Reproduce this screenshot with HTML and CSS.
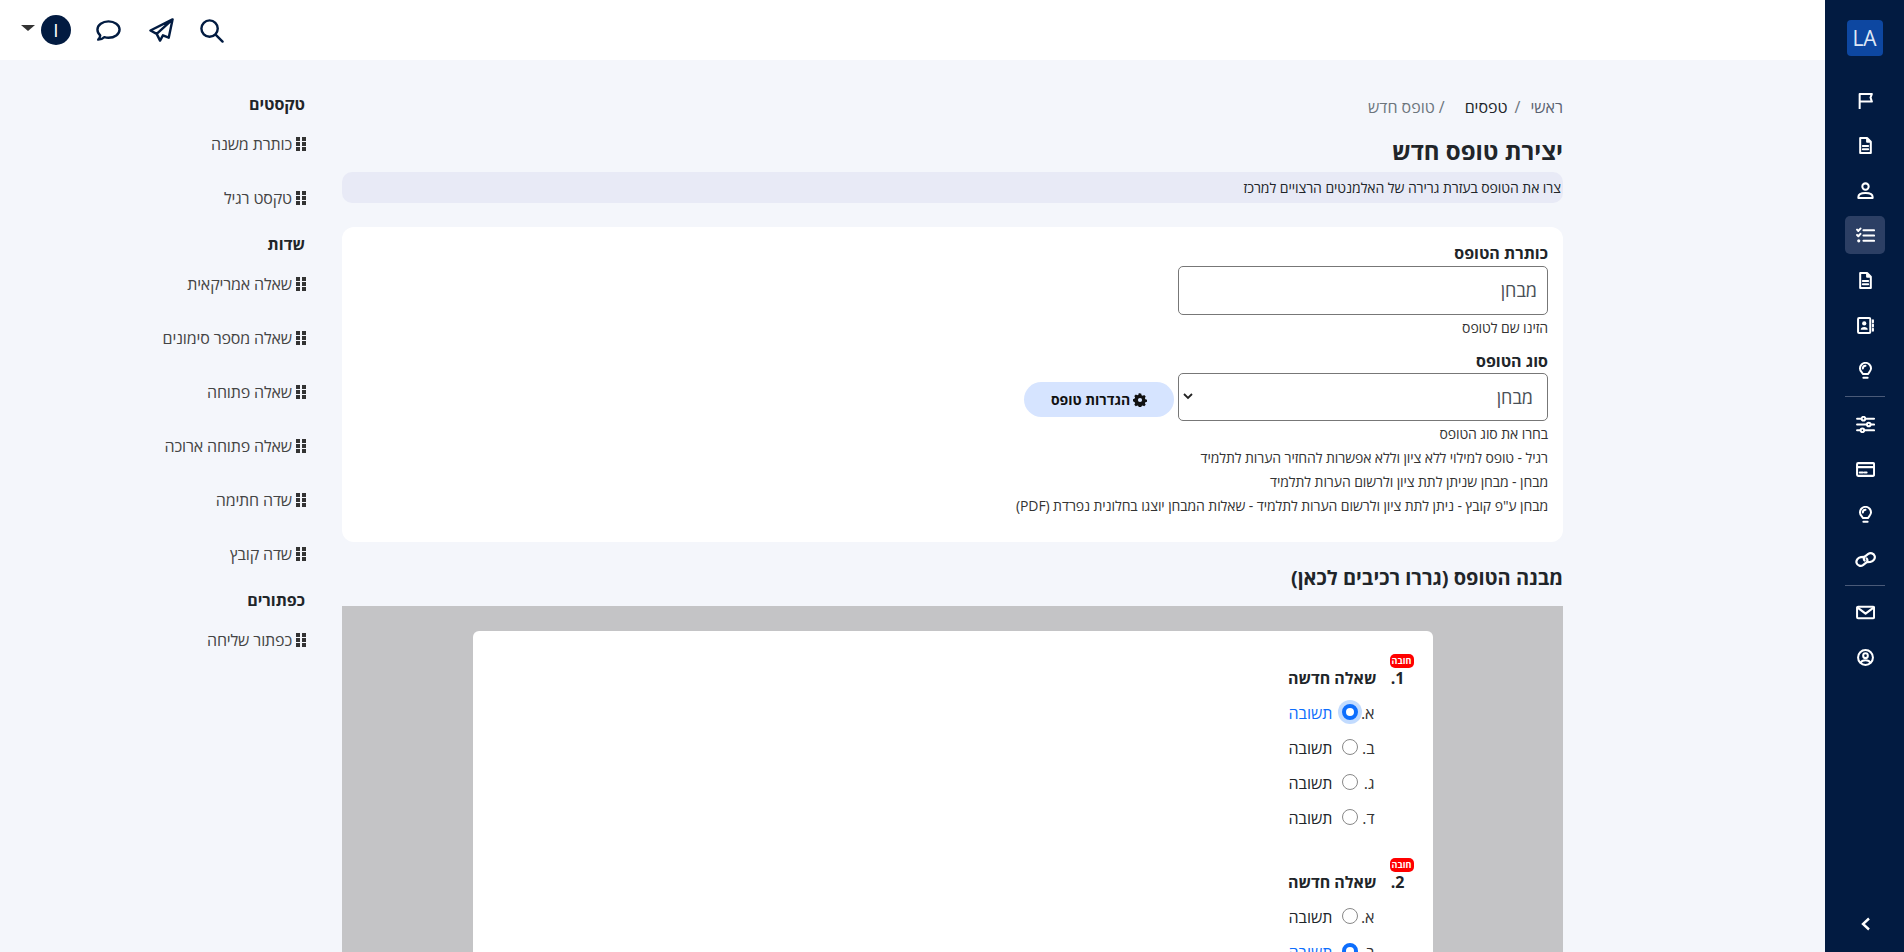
FILE: index.html
```html
<!DOCTYPE html>
<html lang="he" dir="rtl">
<head>
<meta charset="utf-8">
<title>יצירת טופס חדש</title>
<link rel="stylesheet" href="styles.css">
</head>
<body>
<div class="app">
  <aside class="sidebar">
    <div class="logo">LA</div>
    <nav class="nav">
      <a class="nav-item"><svg viewBox="0 0 16 16"><path d="M2.500 15.500V1.800h11.500l-1.300 3.400 1.300 3.800H2.500"/></svg></a>
      <a class="nav-item"><svg viewBox="0 0 16 16"><path d="M3 1h6.500L13 4.500V15H3zM9.500 1v3.500H13M5.500 8.500h5M5.500 11.500h5"/></svg></a>
      <a class="nav-item"><svg viewBox="0 0 16 16"><circle cx="8" cy="4.300" r="3"/><path d="M1.300 15v-1c0-2.400 2.200-3.700 6.700-3.700s6.700 1.300 6.700 3.700v1z"/></svg></a>
      <a class="nav-item active"><svg viewBox="0 0 18 16"><path d="M1 2.500l1.200 1.200L4.200 1.500M1 7.500l1.200 1.200 2-2.200M7 3h10M7 8h10M7 13h10"/><circle class="fill" cx="2.600" cy="13" r="1.500"/></svg></a>
      <a class="nav-item"><svg viewBox="0 0 16 16"><path d="M3 1h6.500L13 4.500V15H3zM9.500 1v3.500H13M5.500 8.500h5M5.500 11.500h5"/></svg></a>
      <a class="nav-item"><svg viewBox="0 0 16 16"><rect x="1" y="1" width="11.500" height="14" rx="1"/><circle class="fill" cx="6.800" cy="6" r="2"/><path class="fill" d="M3.500 12c0-1.700 1.300-2.600 3.300-2.600s3.300.9 3.300 2.600z"/><path d="M15 3v2M15 7v2M15 11v2"/></svg></a>
      <a class="nav-item"><svg viewBox="0 0 16 16"><path d="M5.500 11.200C4.800 9.500 2.800 8.500 2.800 6a5.200 5.200 0 0 1 10.400 0c0 2.500-2 3.500-2.700 5.200zM6 14.800h4M8 3.500C6.700 3.600 5.500 4.700 5.500 6"/></svg></a>
      <div class="nav-sep"></div>
      <a class="nav-item"><svg viewBox="0 0 18 16"><path d="M1 2.500h16M1 8h16M1 13.500h16"/><circle class="bgfill" cx="7" cy="2.500" r="1.700"/><circle class="bgfill" cx="12" cy="8" r="1.700"/><circle class="bgfill" cx="6" cy="13.500" r="1.700"/></svg></a>
      <a class="nav-item"><svg viewBox="0 0 18 16"><rect x="1" y="2" width="16" height="12" rx="1"/><path class="thick" d="M1 5.800h16"/><path d="M3.500 10.800h3M8 10.800h2"/></svg></a>
      <a class="nav-item"><svg viewBox="0 0 16 16"><path d="M5.500 11.200C4.800 9.500 2.800 8.500 2.800 6a5.200 5.200 0 0 1 10.400 0c0 2.500-2 3.500-2.700 5.200zM6 14.800h4M8 3.500C6.700 3.600 5.500 4.700 5.500 6"/></svg></a>
      <a class="nav-item"><svg class="link" viewBox="0 0 20 16"><path class="thick" d="M8.500 5.500l-3 .3C2.500 6.300.8 9 1.500 11.300c.8 2.700 4 3.300 6 2l3-2.300c1.500-1.200 1.500-3 .5-4M11.500 10.500l3-.3c3-.5 4.700-3.200 4-5.500-.8-2.700-4-3.300-6-2l-3 2.300C8 6.200 8 8 9 9"/></svg></a>
      <div class="nav-sep tight"></div>
      <a class="nav-item"><svg viewBox="0 0 18 16"><rect x="1" y="2.500" width="16" height="11" rx="1"/><path class="thick" d="M1.500 3.500L9 9l7.500-5.500"/></svg></a>
      <a class="nav-item"><svg viewBox="0 0 16 16"><circle cx="8" cy="8" r="7"/><circle cx="8" cy="6.300" r="2.200"/><path d="M3.500 12.800c.6-1.500 2-2.300 4.500-2.300s3.900.8 4.500 2.300"/></svg></a>
    </nav>
    <div class="collapse"><svg viewBox="0 0 12 14"><path d="M9 1.500L3 7l6 5.500"/></svg></div>
  </aside>

  <div class="page">
    <header class="topbar">
      <svg class="top-icon" viewBox="0 0 26 26"><circle cx="11" cy="11" r="8.500"/><path d="M17.500 17.500L24.500 24.500"/></svg>
      <svg class="top-icon plane" viewBox="0 0 26 26"><path d="M24.500 1.500L1.500 13l6.500 3.500zM24.500 1.500L8 16.500l3.500 7 3-5.500 6 2.500z"/></svg>
      <svg class="top-icon chat" viewBox="0 0 26 26"><path d="M13 3.500c6.200 0 11.500 3.500 11.500 8.500s-5.300 8.500-11.500 8.500c-1.600 0-3-.2-4.300-.6C7 21.500 5 22.500 2.300 22.500c1.300-1.300 2-2.800 2.100-4.300C2.600 16.600 1.500 14.500 1.500 12 1.500 7 6.800 3.500 13 3.500z"/></svg>
      <div class="user">
        <span class="avatar">I</span>
        <span class="caret"></span>
      </div>
    </header>

    <div class="content">
      <main class="main">
        <nav class="crumbs">
          <span class="crumb">ראשי</span><span class="crumb-sep">/</span>
          <span class="crumb strong">טפסים</span><span class="crumb-sep near">/</span>
          <span class="crumb muted">טופס חדש</span>
        </nav>
        <h1 class="title">יצירת טופס חדש</h1>
        <div class="lead">צרו את הטופס בעזרת גרירה של האלמנטים הרצויים למרכז</div>

        <section class="card">
          <div class="label">כותרת הטופס</div>
          <div class="field-box input-box">מבחן</div>
          <div class="help first">הזינו שם לטופס</div>
          <div class="label second">סוג הטופס</div>
          <div class="select-row">
            <div class="field-box select-box">
              <span>מבחן</span>
              <svg class="chev" viewBox="0 0 10 8"><path d="M1 2l4 4 4-4"/></svg>
            </div>
            <button class="settings">
              <svg class="gear" viewBox="0 0 16 16"><path d="M8 .5l1.300.2.500 1.900 1.300.6 1.700-.9 1.700 1.800-.9 1.600.5 1.300 1.900.6v2.300l-1.900.6-.5 1.300.9 1.600-1.700 1.800-1.700-.9-1.300.6-.5 1.900H6.700l-.5-1.900-1.300-.6-1.700.9-1.700-1.800.9-1.600-.5-1.300L0 9.300V7l1.900-.6.500-1.300-.9-1.600 1.700-1.800 1.700.9 1.300-.6.500-1.900z"/><circle class="hole" cx="8" cy="8" r="2.400"/></svg>
              הגדרות טופס
            </button>
          </div>
          <div class="help">בחרו את סוג הטופס</div>
          <div class="help">רגיל - טופס למילוי ללא ציון וללא אפשרות להחזיר הערות לתלמיד</div>
          <div class="help">מבחן - מבחן שניתן לתת ציון ולרשום הערות לתלמיד</div>
          <div class="help">מבחן ע"פ קובץ - ניתן לתת ציון ולרשום הערות לתלמיד - שאלות המבחן יוצגו בחלונית נפרדת (PDF)</div>
        </section>

        <h2 class="subtitle">מבנה הטופס (גררו רכיבים לכאן)</h2>

        <section class="canvas">
          <div class="paper">
            <div class="question">
              <span class="badge">חובה</span>
              <div class="q-title"><span class="q-num">1.</span><span>שאלה חדשה</span></div>
              <label class="option selected"><span class="letter">א.</span><input class="radio focused" type="radio" name="q1" checked><span>תשובה</span></label>
              <label class="option"><span class="letter">ב.</span><input class="radio" type="radio" name="q1"><span>תשובה</span></label>
              <label class="option"><span class="letter">ג.</span><input class="radio" type="radio" name="q1"><span>תשובה</span></label>
              <label class="option"><span class="letter">ד.</span><input class="radio" type="radio" name="q1"><span>תשובה</span></label>
            </div>
            <div class="question">
              <span class="badge">חובה</span>
              <div class="q-title"><span class="q-num">2.</span><span>שאלה חדשה</span></div>
              <label class="option"><span class="letter">א.</span><input class="radio" type="radio" name="q2"><span>תשובה</span></label>
              <label class="option selected"><span class="letter">ב.</span><input class="radio" type="radio" name="q2" checked><span>תשובה</span></label>
            </div>
          </div>
        </section>
      </main>

      <aside class="palette">
        <div class="p-head">טקסטים</div>
        <div class="p-item"><svg class="grip" viewBox="0 0 10 14"><path d="M0 0h4v4H0zM6 0h4v4H6zM0 5h4v4H0zM6 5h4v4H6zM0 10h4v4H0zM6 10h4v4H6z"/></svg>כותרת משנה</div>
        <div class="p-item"><svg class="grip" viewBox="0 0 10 14"><path d="M0 0h4v4H0zM6 0h4v4H6zM0 5h4v4H0zM6 5h4v4H6zM0 10h4v4H0zM6 10h4v4H6z"/></svg>טקסט רגיל</div>
        <div class="p-head">שדות</div>
        <div class="p-item"><svg class="grip" viewBox="0 0 10 14"><path d="M0 0h4v4H0zM6 0h4v4H6zM0 5h4v4H0zM6 5h4v4H6zM0 10h4v4H0zM6 10h4v4H6z"/></svg>שאלה אמריקאית</div>
        <div class="p-item"><svg class="grip" viewBox="0 0 10 14"><path d="M0 0h4v4H0zM6 0h4v4H6zM0 5h4v4H0zM6 5h4v4H6zM0 10h4v4H0zM6 10h4v4H6z"/></svg>שאלה מספר סימונים</div>
        <div class="p-item"><svg class="grip" viewBox="0 0 10 14"><path d="M0 0h4v4H0zM6 0h4v4H6zM0 5h4v4H0zM6 5h4v4H6zM0 10h4v4H0zM6 10h4v4H6z"/></svg>שאלה פתוחה</div>
        <div class="p-item"><svg class="grip" viewBox="0 0 10 14"><path d="M0 0h4v4H0zM6 0h4v4H6zM0 5h4v4H0zM6 5h4v4H6zM0 10h4v4H0zM6 10h4v4H6z"/></svg>שאלה פתוחה ארוכה</div>
        <div class="p-item"><svg class="grip" viewBox="0 0 10 14"><path d="M0 0h4v4H0zM6 0h4v4H6zM0 5h4v4H0zM6 5h4v4H6zM0 10h4v4H0zM6 10h4v4H6z"/></svg>שדה חתימה</div>
        <div class="p-item"><svg class="grip" viewBox="0 0 10 14"><path d="M0 0h4v4H0zM6 0h4v4H6zM0 5h4v4H0zM6 5h4v4H6zM0 10h4v4H0zM6 10h4v4H6z"/></svg>שדה קובץ</div>
        <div class="p-head">כפתורים</div>
        <div class="p-item"><svg class="grip" viewBox="0 0 10 14"><path d="M0 0h4v4H0zM6 0h4v4H6zM0 5h4v4H0zM6 5h4v4H6zM0 10h4v4H0zM6 10h4v4H6z"/></svg>כפתור שליחה</div>
      </aside>
    </div>
  </div>
</div>
</body>
</html>
```

FILE: styles.css
```css
* { box-sizing: border-box; }
html, body { margin: 0; height: 100%; overflow: hidden; }
body {
  font-family: "Open Sans", "Noto Sans", "Liberation Sans", sans-serif;
  font-size: 16px;
  color: #212529;
  background: #f4f6fb;
}
.app { display: flex; height: 952px; overflow: hidden; }

/* sidebar */
.sidebar {
  width: 79px;
  flex: none;
  background: #021b41;
  display: flex;
  flex-direction: column;
  align-items: center;
  padding-top: 20px;
  position: relative;
}
.logo {
  width: 36px;
  height: 36px;
  background: #0d47a1;
  border-radius: 4px;
  color: #dfe8f6;
  font-size: 21px;
  line-height: 36px;
  text-align: center;
}
.nav { display: flex; flex-direction: column; align-items: center; margin-top: 25px; width: 40px; }
.nav-item {
  width: 40px;
  height: 38px;
  margin-bottom: 7px;
  border-radius: 5px;
  display: flex;
  align-items: center;
  justify-content: center;
  padding-left: 2px;
  flex: none;
}
.nav-item.active { background: #2c3f64; }
.nav-item svg { height: 17px; width: auto; fill: none; stroke: #fff; stroke-width: 1.9; stroke-linejoin: round; stroke-linecap: round; }
.nav-item svg .fill { fill: #fff; stroke: none; }
.nav-item svg .bgfill { fill: #021b41; }
.nav-item svg .thick { stroke-width: 2.100; }
.nav-sep { width: 40px; height: 1px; background: #4a5a78; margin: 0 0 8px; flex: none; }
.nav-sep.tight { margin-bottom: 7px; }
.collapse { position: absolute; bottom: 21px; left: 0; right: 0; display: flex; justify-content: center; padding-left: 2px; }
.collapse svg { width: 12px; height: 14px; fill: none; stroke: #fff; stroke-width: 2.400; }

/* page */
.page { flex: 1; min-width: 0; display: flex; flex-direction: column; }
.topbar {
  height: 60px;
  flex: none;
  background: #fff;
  display: flex;
  align-items: center;
  justify-content: flex-end;
  padding-left: 21px;
}
.top-icon { width: 25px; height: 25px; fill: none; stroke: #021b41; stroke-width: 2.500; stroke-linejoin: round; stroke-linecap: round; margin-left: 25px; flex: none; }
.top-icon.plane { margin-left: 28px; }
.top-icon.chat { margin-left: 25px; }
.user { display: flex; align-items: center; gap: 6px; }
.avatar {
  width: 30px;
  height: 30px;
  border-radius: 50%;
  background: #021b41;
  color: #fff;
  font-size: 19px;
  line-height: 30px;
  text-align: center;
}
.caret { width: 0; height: 0; border-left: 7px solid transparent; border-right: 7px solid transparent; border-top: 6px solid #333; margin-top: -4px; }

.content { display: flex; flex: 1; min-height: 0; }
.main { width: 1221px; margin-right: 262px; flex: none; padding-top: 35px; }

.crumbs { display: flex; align-items: center; font-size: 16px; line-height: 24px; height: 24px; color: #555; }
.crumb { color: #5a6270; }
.crumb.strong { color: #212529; margin-left: 10px; }
.crumb.muted { color: #6c757d; }
.crumb-sep { margin: 0 10px 0 7px; color: #6c757d; }
.crumb-sep.near { margin-left: 4px; }
.title { margin: 14px 0 0; font-size: 24px; font-weight: 700; line-height: 36px; height: 36px; color: #212529; }
.lead {
  margin-top: 3px;
  height: 31px;
  background: #e8eaf6;
  border-radius: 10px;
  font-size: 14px;
  letter-spacing: -0.07px;
  line-height: 31px;
  padding: 0 2px;
  color: #212529;
}
.card {
  background: #fff;
  border-radius: 12px;
  margin-top: 24px;
  height: 315px;
  padding: 14px 15px 0;
}
.label { font-size: 16px; font-weight: 700; line-height: 24px; height: 24px; color: #212529; }
.label.second { margin-top: 9px; }
.field-box {
  width: 370px;
  border: 1px solid #777;
  border-radius: 5px;
  background: #fff;
  font-size: 18px;
  color: #495057;
}
.input-box { height: 49px; line-height: 47px; padding: 0 10px; margin-top: 1px; }
.select-row { display: flex; align-items: center; gap: 4px; margin-bottom: 1px; }
.select-box { height: 48px; line-height: 46px; padding: 0 14px 0 4px; display: flex; justify-content: space-between; align-items: center; flex: none; }
.chev { width: 10px; height: 8px; fill: none; stroke: #222; stroke-width: 1.800; margin-top: -2px; }
.settings {
  width: 150px;
  height: 35px;
  margin-top: 5px;
  border: 0;
  border-radius: 18px;
  background: #d6e4ff;
  font-family: inherit;
  font-size: 14px;
  font-weight: 700;
  color: #111;
  display: flex;
  align-items: center;
  justify-content: center;
  gap: 3px;
  padding: 0;
}
.gear { width: 14px; height: 14px; fill: #111; }
.gear .hole { fill: #d6e4ff; }
.help { font-size: 14px; letter-spacing: -0.09px; line-height: 24px; height: 24px; color: #333; }
.help.first { margin-top: 1px; }

.subtitle { margin: 21px 0 0; font-size: 20px; font-weight: 700; line-height: 30px; height: 30px; color: #212529; }
.canvas { margin-top: 13px; background: #c4c4c6; height: 700px; padding-top: 25px; }
.paper { width: 960px; margin: 0 auto; background: #fff; border-radius: 6px; height: 660px; }
.question { position: relative; padding: 24px 28px 0 0; height: 204px; }
.badge {
  position: absolute;
  top: 23px;
  right: 19px;
  width: 24px;
  height: 14px;
  background: #f00;
  color: #fff;
  border-radius: 5px;
  font-size: 9px;
  font-weight: 700;
  line-height: 14px;
  text-align: center;
}
.q-title { display: flex; font-weight: 700; font-size: 16px; line-height: 24px; height: 24px; margin: 11px 0 5px; }
.q-num { width: 28px; flex: none; }
.option { display: flex; align-items: center; height: 35px; font-size: 16px; color: #212529; margin-right: 30px; }
.option.selected { color: #0d6efd; }
.option .letter { color: #333; width: 17px; flex: none; }
.radio {
  appearance: none;
  width: 16px;
  height: 16px;
  border: 1px solid #888;
  border-radius: 50%;
  background: #fff;
  margin: 0 0 2px 9px;
  flex: none;
}
.radio:checked { border: 4px solid #0d6efd; }
.radio.focused { box-shadow: 0 0 0 4px rgba(13, 110, 253, .25); }

/* palette */
.palette { width: 290px; margin-right: 36px; padding-top: 32px; flex: none; color: #444; }
.p-head { font-size: 16px; font-weight: 700; line-height: 24px; height: 24px; color: #212529; margin-right: 1px; margin-bottom: 16px; }
.p-item { display: flex; align-items: center; gap: 4px; font-size: 16px; letter-spacing: -0.15px; line-height: 24px; height: 24px; margin-bottom: 30px; color: #444; }
.p-item + .p-head { margin-top: -8px; }
.grip { width: 10px; height: 14px; fill: #333; flex: none; }
```
